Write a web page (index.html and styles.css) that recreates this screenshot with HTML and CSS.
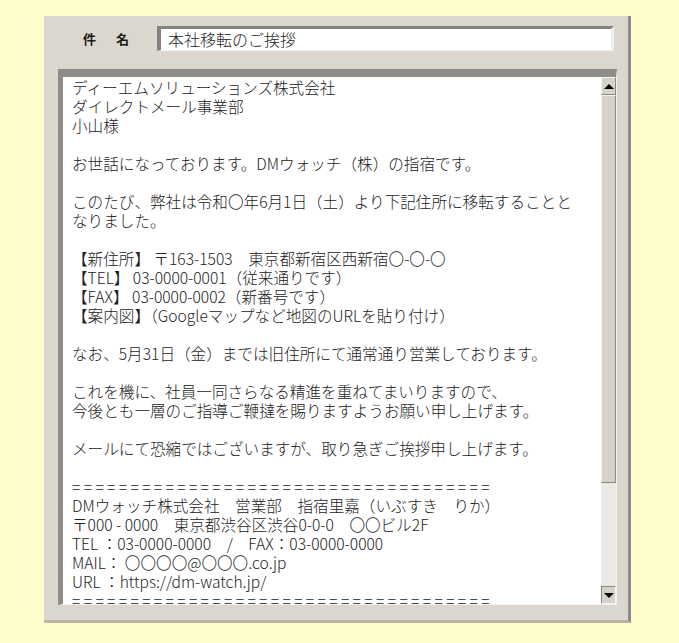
FILE: index.html
```html
<!DOCTYPE html>
<html lang="ja">
<head>
    <meta charset="UTF-8">
    <title>本社移転のご挨拶</title>
    <link rel="stylesheet" href="styles.css">
</head>
<body>
    <div class="mail-window">
        <div class="subject-row">
            <span class="subject-label">件　名</span>
            <div class="subject-field">本社移転のご挨拶</div>
        </div>

        <div class="body-box">
            <div class="body-text">ディーエムソリューションズ株式会社
ダイレクトメール事業部
小山様

お世話になっております。DMウォッチ（株）の指宿です。

このたび、弊社は令和〇年6月1日（土）より下記住所に移転することと
なりました。

【新住所】 〒163-1503　東京都新宿区西新宿〇-〇-〇
【TEL】 03-0000-0001（従来通りです）
【FAX】 03-0000-0002（新番号です）
【案内図】（Googleマップなど地図のURLを貼り付け）

なお、5月31日（金）までは旧住所にて通常通り営業しております。

これを機に、社員一同さらなる精進を重ねてまいりますので、
今後とも一層のご指導ご鞭撻を賜りますようお願い申し上げます。

メールにて恐縮ではございますが、取り急ぎご挨拶申し上げます。

<span class="rule">====================================</span>
DMウォッチ株式会社　営業部　指宿里嘉（いぶすき　りか）
〒000 - 0000　東京都渋谷区渋谷0-0-0　〇〇ビル2F
TEL ：03-0000-0000　/　FAX：03-0000-0000
MAIL： 〇〇〇〇@〇〇〇.co.jp
URL ：https://dm-watch.jp/
<span class="rule">====================================</span>
</div>
            <div class="scrollbar">
                <div class="scroll-btn"><span class="arrow-up"></span></div>
                <div class="scroll-thumb"></div>
                <div class="scroll-track"></div>
                <div class="scroll-btn scroll-btn-down"><span class="arrow-down"></span></div>
            </div>
        </div>
    </div>
</body>
</html>
```

FILE: styles.css
```css
body {
    margin: 0;
    background-color: #fffdcc;
    font-family: "Noto Sans CJK JP", "Noto Sans", sans-serif;
    color: #222;
}
.mail-window {
    box-sizing: border-box;
    width: 587px;
    height: 607px;
    margin: 16px 0 0 44px;
    padding: 10px 11px 0 14px;
    background-color: #dbd7cf;
    border-right: 3px solid #8a8a88;
    border-bottom: 3px solid #b9b5ad;
}
.subject-row {
    display: flex;
    align-items: center;
    height: 25px;
}
.subject-label {
    width: 99px;
    padding-left: 25px;
    box-sizing: border-box;
    font-size: 13px;
    font-weight: bold;
    letter-spacing: 3.5px;
    color: #1a1a1a;
}
.subject-field {
    box-sizing: border-box;
    width: 457px;
    height: 25px;
    padding-left: 7px;
    background: white;
    border-top: 3px solid #838383;
    border-left: 4px solid #838383;
    border-right: 3px solid #efefef;
    border-bottom: 1px solid #efefef;
    font-size: 16px;
    font-weight: 300;
    line-height: 20px;
    color: #222;
}
.body-box {
    box-sizing: border-box;
    display: flex;
    height: 536px;
    width: 559px;
    margin-top: 18px;
    background: white;
    border-top: 8px solid #8e8c88;
    border-left: 5px solid #8e8c88;
    border-right: 1px solid #f2f2f2;
    border-bottom: 1px solid #f2f2f2;
    overflow: hidden;
}
.body-text {
    flex: 1;
    padding: 1px 0 0 9px;
    white-space: pre;
    font-size: 15.6px;
    font-weight: 300;
    line-height: 19px;
    color: #222;
    overflow: hidden;
}
.rule {
    letter-spacing: 3.35px;
}
.scrollbar {
    width: 15px;
    display: flex;
    flex-direction: column;
    background: #eceae6;
}
.scroll-btn {
    box-sizing: border-box;
    height: 18px;
    display: flex;
    align-items: center;
    justify-content: center;
    background: #d6d2ca;
    border-top: 1px solid #f4f4f2;
    border-left: 1px solid #f4f4f2;
    border-right: 1px solid #8a8884;
    border-bottom: 1px solid #8a8884;
}
.scroll-btn-down {
    border-top: 1px solid #8a8884;
    border-left: 1px solid #8a8884;
    border-right: 1px solid #f4f4f2;
    border-bottom: 1px solid #f4f4f2;
}
.arrow-up {
    width: 0;
    height: 0;
    border-left: 5px solid transparent;
    border-right: 5px solid transparent;
    border-bottom: 5px solid #000;
}
.arrow-down {
    width: 0;
    height: 0;
    border-left: 5px solid transparent;
    border-right: 5px solid transparent;
    border-top: 5px solid #000;
}
.scroll-thumb {
    box-sizing: border-box;
    height: 388px;
    background: #d6d2ca;
    border-top: 1px solid #f4f4f2;
    border-left: 1px solid #f4f4f2;
    border-right: 1px solid #8a8884;
    border-bottom: 1px solid #8a8884;
}
.scroll-track {
    flex: 1;
    background: #ebe9e5;
}
```
